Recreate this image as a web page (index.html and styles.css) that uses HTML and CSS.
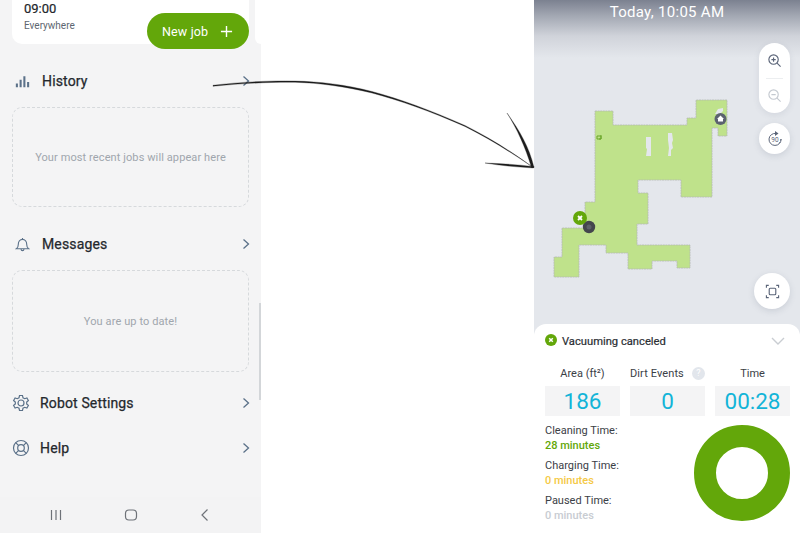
FILE: index.html
```html
<!DOCTYPE html>
<html lang="en">
<head>
<meta charset="utf-8">
<title>Robot vacuum</title>
<link rel="stylesheet" href="styles.css">
</head>
<body>
<div class="page">
  <section class="phone">
    <div class="job-card">
      <div class="job-time">09:00</div>
      <div class="job-where">Everywhere</div>
      <div class="new-job">
        <span>New job</span>
        <svg class="plus" viewBox="0 0 14 14"><path d="M7 1v12M1 7h12"/></svg>
      </div>
    </div>
    <div class="peek-card"></div>

    <div class="row row-history">
      <svg class="ico" viewBox="0 0 16 16"><path d="M2 14V10M6 14V6M10 14V2.500M14 14V8.500" class="bars"/></svg>
      <span class="row-title">History</span>
      <svg class="chev" viewBox="0 0 8 12"><path d="M1.500 1.500 6.500 6l-5 4.500"/></svg>
    </div>
    <div class="empty empty-history">Your most recent jobs will appear here</div>

    <div class="row row-messages">
      <svg class="ico" viewBox="0 0 16 16"><path d="M1.500 12.500c1.500-1 2-2.200 2-4.500 0-3 1.800-5.500 4.500-5.500s4.500 2.500 4.500 5.500c0 2.300.5 3.500 2 4.500zM6.500 13c0 2 3 2 3 0M8 1v1.500"/></svg>
      <span class="row-title">Messages</span>
      <svg class="chev" viewBox="0 0 8 12"><path d="M1.500 1.500 6.500 6l-5 4.500"/></svg>
    </div>
    <div class="empty empty-messages">You are up to date!</div>

    <div class="row row-settings">
      <svg class="ico ico-wide" viewBox="0 0 18 18"><path d="M7.500 1.500h3l.5 2.300 1.700.9 2.200-.8 1.500 2.600-1.700 1.500v2l1.700 1.500-1.500 2.600-2.200-.8-1.700.9-.5 2.300h-3l-.5-2.300-1.700-.9-2.200.8-1.500-2.600 1.700-1.500v-2L1.600 6.500l1.500-2.600 2.200.8 1.700-.9z"/><circle cx="9" cy="9" r="3"/></svg>
      <span class="row-title">Robot Settings</span>
      <svg class="chev" viewBox="0 0 8 12"><path d="M1.500 1.500 6.500 6l-5 4.500"/></svg>
    </div>
    <div class="row row-help">
      <svg class="ico ico-wide" viewBox="0 0 18 18"><circle cx="9" cy="9" r="7.500"/><circle cx="9" cy="9" r="3.300"/><path d="M3.700 3.700 6.700 6.700M14.300 3.700 11.300 6.700M3.700 14.300 6.700 11.300M14.300 14.300 11.300 11.300"/></svg>
      <span class="row-title">Help</span>
      <svg class="chev" viewBox="0 0 8 12"><path d="M1.500 1.500 6.500 6l-5 4.500"/></svg>
    </div>

    <div class="scrollbar"></div>

    <nav class="sys-nav">
      <svg class="sys-ico" viewBox="0 0 14 14"><path d="M2.500 2v10M7 2v10M11.500 2v10"/></svg>
      <svg class="sys-ico" viewBox="0 0 14 14"><rect x="1.500" y="2" width="11" height="10" rx="3.500"/></svg>
      <svg class="sys-ico" viewBox="0 0 14 14"><path d="M9.500 1.500 4 7l5.500 5.500"/></svg>
    </nav>
  </section>

  <div class="gap"></div>

  <section class="report">
    <div class="map">
      <div class="map-date">Today, 10:05 AM</div>
      <svg class="floor" viewBox="0 0 266 324">
        <path class="room" d="M61 111H79V125H153V118H162V100H193V136H184V128H178V197H147V180H104V193H114V224H103V245H156V268H143V261H118V269H94V253H72V245H45V277H20V257H28V228H51V202H61Z"/>
        <path class="hole" d="M112 137h5v19h-5l1-7-1-1zM134 133h4l1 7-1 3 1 5-2 2v6h-3l1-8-1-8z"/>
        <path class="hole" d="M181 114l3-5 5-1v3l-3 3z"/>
        <path class="mark" d="M63 136h4v3h-4zM65 139h2v-4"/>
        <circle class="home-dot" cx="186.500" cy="119" r="6"/>
        <path class="home-ico" d="M186.500 115.500 190 119h-1v2.500h-5V119h-1z"/>
        <circle class="robot" cx="55" cy="227" r="6.200"/>
        <circle class="robot-core" cx="55" cy="227" r="2.500"/>
        <circle class="pin" cx="46" cy="218" r="7"/>
        <path class="pin-x" d="M44 216l4 4M48 216l-4 4"/>
      </svg>
      <div class="zoom-pill">
        <svg class="ctl" viewBox="0 0 16 16"><circle cx="7" cy="7" r="5"/><path d="M10.700 10.700 14.500 14.500M7 4.700v4.600M4.700 7h4.600"/></svg>
        <div class="pill-line"></div>
        <svg class="ctl ctl-off" viewBox="0 0 16 16"><circle cx="7" cy="7" r="5"/><path d="M10.700 10.700 14.500 14.500M4.700 7h4.600"/></svg>
      </div>
      <div class="round-btn rotate">
        <svg class="ctl-rot" viewBox="0 0 18 18"><path d="M10 3.500A6 6 0 1 0 15 9" /><path class="rot-head" d="M9 1l3.500 2.500L9 6z"/><path class="rot-dash" d="M15 9a6 6 0 0 1-2 4.500"/><text x="9" y="11.500" class="rot-text">90</text></svg>
      </div>
      <div class="round-btn fit">
        <svg class="ctl" viewBox="0 0 16 16"><rect x="4.500" y="4.500" width="7" height="7" rx="1"/><path d="M1.500 4V1.500H4M12 1.500h2.500V4M14.500 12v2.500H12M4 14.500H1.500V12"/></svg>
      </div>
    </div>

    <div class="sheet">
      <div class="sheet-head">
        <svg class="status" viewBox="0 0 12 12"><circle cx="6" cy="6" r="6"/><path d="M4.200 4.200l3.600 3.600M7.800 4.200 4.200 7.800"/></svg>
        <span class="sheet-title">Vacuuming canceled</span>
        <svg class="collapse" viewBox="0 0 14 8"><path d="M1 1l6 6 6-6"/></svg>
      </div>
      <div class="stats">
        <div class="stat"><div class="stat-label">Area (ft²)</div><div class="stat-value">186</div></div>
        <div class="stat"><div class="stat-label stat-label-start">Dirt Events<span class="q">?</span></div><div class="stat-value">0</div></div>
        <div class="stat"><div class="stat-label">Time</div><div class="stat-value">00:28</div></div>
      </div>
      <div class="detail">
        <div class="times">
          <div class="time-item"><div>Cleaning Time:</div><div class="val val-green">28 minutes</div></div>
          <div class="time-item"><div>Charging Time:</div><div class="val val-yellow">0 minutes</div></div>
          <div class="time-item"><div>Paused Time:</div><div class="val val-grey">0 minutes</div></div>
        </div>
        <svg class="donut" viewBox="0 0 96 96"><circle cx="48" cy="48" r="37"/></svg>
      </div>
    </div>
  </section>

  <svg class="arrow" viewBox="0 0 800 533">
    <path class="arrow-fill" d="M213 85.300C240 82 270 80.500 295 81C320 81.700 345 84.500 372 91.500C400 99 430 110 465 125.500C490 138 512 152 532.500 167C512 153 490 139 465 126.500C430 111 400 100.500 372 93C345 86.500 320 83 295 82.300C270 82 240 83.500 213 86.300Z"/>
    <path class="arrow-fill" d="M507 113C516 127 525 146 531.500 167.500L534 167.500C529 146 519 130 507 113Z"/>
    <path class="arrow-fill" d="M485 163C500 163.500 516 164.500 534 166.500L533.500 168C516 167 500 165.500 485 163Z"/>
  </svg>
</div>
</body>
</html>
```
FILE: styles.css
```css
* { box-sizing: border-box; }
html, body { margin: 0; height: 100%; background: #fff; }
body { font-family: Roboto, "Liberation Sans", sans-serif; overflow: hidden; }

.page { position: relative; display: flex; width: 800px; height: 533px; }
.gap { width: 273px; flex: none; }

/* Left phone */
.phone {
  position: relative;
  width: 261px;
  height: 533px;
  flex: none;
  background: #f4f4f5;
  padding-left: 12px;
  padding-right: 12px;
}
.job-card {
  position: relative;
  width: 237px;
  height: 44px;
  background: #fff;
  border-radius: 0 0 10px 10px;
  padding: 1px 12px 0;
}
.peek-card {
  position: absolute;
  left: 255px;
  top: 0;
  width: 6px;
  height: 44px;
  background: #fff;
  border-radius: 0 0 0 8px;
}
.job-time { font-size: 13px; line-height: 16px; color: #23272c; -webkit-text-stroke: .2px #23272c; }
.job-where { font-size: 10px; line-height: 12px; margin-top: 3px; color: #5d6670; }
.new-job {
  position: absolute;
  left: 135px;
  top: 13px;
  width: 102px;
  height: 36px;
  border-radius: 18px;
  background: #63a70a;
  color: #fff;
  font-size: 12.500px;
  display: flex;
  align-items: center;
  padding-left: 15px;
  gap: 12px;
  letter-spacing: .15px;
}
.plus { width: 13px; height: 13px; fill: none; stroke: #fff; stroke-width: 1.500; }

.row { display: flex; align-items: center; height: 24px; gap: 10px; }
.row-history { margin-top: 25px; padding-left: 3px; gap: 12px; }
.row-messages { margin-top: 25px; padding-left: 3px; gap: 12px; }
.row-settings { margin-top: 19px; }
.row-help { margin-top: 21px; }
.row-title { font-size: 14px; color: #24282d; flex: 1; letter-spacing: .15px; -webkit-text-stroke: .25px #24282d; }
.ico { width: 15px; height: 15px; fill: none; stroke: #5b7189; stroke-width: 1.200; flex: none; }
.ico-wide { width: 18px; height: 18px; }
.bars { stroke-width: 2.200; }
.chev { width: 8px; height: 12px; fill: none; stroke: #5b7189; stroke-width: 1.300; flex: none; margin-right: -1px; }
.empty {
  display: flex;
  align-items: center;
  justify-content: center;
  border: 1px dashed #d6d9dc;
  border-radius: 10px;
  color: #a0a6ad;
  font-size: 11px;
  letter-spacing: .1px;
}
.empty-history { height: 100px; margin-top: 14px; }
.empty-messages { height: 102px; margin-top: 14px; }

.scrollbar {
  position: absolute;
  right: 0;
  top: 303px;
  width: 2px;
  height: 97px;
  background: #d3d6d9;
}
.sys-nav {
  position: absolute;
  left: 0;
  bottom: 0;
  width: 261px;
  height: 36px;
  background: #f3f3f4;
  display: flex;
  justify-content: space-between;
  align-items: center;
  padding: 0 49px;
}
.sys-ico { width: 14px; height: 14px; fill: none; stroke: #6e7278; stroke-width: 1.200; }

/* Right report */
.report {
  width: 266px;
  height: 533px;
  flex: none;
  display: flex;
  flex-direction: column;
  background: #e4e7ec;
}
.map {
  position: relative;
  height: 324px;
  flex: none;
  background: linear-gradient(#7b8190 0, #a3a8b3 16px, #d0d3da 36px, #e4e7ec 58px);
}
.map-date {
  text-align: center;
  color: #fff;
  font-size: 15px;
  line-height: 24px;
  letter-spacing: .3px;
}
.floor { position: absolute; left: 0; top: 0; width: 266px; height: 324px; }
.room { fill: #bfe28b; stroke: #b4bab4; stroke-width: .8; stroke-dasharray: 2 .6; }
.hole { fill: #e4e7ec; }
.mark { fill: none; stroke: #6aa52a; stroke-width: 1; }
.home-dot { fill: #5c6270; }
.home-ico { fill: #fff; }
.robot { fill: #44464d; }
.robot-core { fill: #5d6068; }
.pin { fill: #63a70a; }
.pin-x { fill: none; stroke: #fff; stroke-width: 1.800; }

.zoom-pill {
  position: absolute;
  left: 225px;
  top: 43px;
  width: 31px;
  height: 70px;
  border-radius: 16px;
  background: #fff;
  box-shadow: 0 2px 6px rgba(90, 100, 120, .12);
  display: flex;
  flex-direction: column;
  align-items: center;
  justify-content: space-between;
  padding: 10px 0;
}
.pill-line { width: 17px; height: 1px; background: #eceef0; }
.ctl { width: 15px; height: 15px; fill: none; stroke: #5a6478; stroke-width: 1.200; }
.ctl-off { stroke: #c4c9d0; }
.round-btn {
  position: absolute;
  border-radius: 50%;
  background: #fff;
  box-shadow: 0 2px 6px rgba(90, 100, 120, .18);
  display: flex;
  align-items: center;
  justify-content: center;
}
.rotate { left: 225px; top: 123px; width: 31px; height: 31px; }
.fit { left: 220px; top: 273px; width: 36px; height: 36px; }
.ctl-rot { width: 18px; height: 18px; fill: none; stroke: #5a6478; stroke-width: 1; }
.rot-head { fill: #5a6478; stroke: none; }
.rot-dash { stroke-dasharray: 1.500 1.500; }
.rot-text { font-size: 6.500px; text-anchor: middle; fill: #5a6478; stroke: none; font-family: Roboto, sans-serif; }

.sheet {
  flex: 1;
  background: #fff;
  border-radius: 12px 12px 0 0;
  padding: 0 10px 0 11px;
}
.sheet-head { display: flex; align-items: center; height: 34px; }
.status { width: 12px; height: 12px; margin-top: -2px; margin-right: 5px; flex: none; }
.status circle { fill: #63a70a; }
.status path { fill: none; stroke: #fff; stroke-width: 1.500; }
.sheet-title { font-size: 11.200px; color: #2b2f34; flex: 1; -webkit-text-stroke: .2px #2b2f34; }
.collapse { width: 14px; height: 8px; fill: none; stroke: #c9cdd2; stroke-width: 1.400; margin-right: 5px; }

.stats { display: flex; gap: 10px; margin-top: 7px; }
.stat { width: 75px; }
.stat-label {
  display: flex;
  align-items: center;
  justify-content: center;
  height: 21px;
  padding-bottom: 5px;
  font-size: 11px;
  color: #3b4046;
  position: relative;
}
.stat-label-start { justify-content: flex-start; letter-spacing: .1px; }
.q {
  position: absolute;
  right: 0;
  top: 2px;
  width: 13px;
  height: 13px;
  border-radius: 50%;
  background: #e2e6ec;
  color: #fff;
  font-size: 9px;
  text-align: center;
  line-height: 13px;
}
.stat-value {
  height: 30px;
  background: #f4f4f5;
  color: #13b4d8;
  font-size: 22.500px;
  line-height: 30px;
  text-align: center;
}
.detail { display: flex; justify-content: space-between; }
.times { padding-top: 7px; font-size: 11px; line-height: 15px; color: #3b4046; }
.time-item { margin-bottom: 5px; }
.val { font-weight: 500; }
.val-green { color: #63a70a; }
.val-yellow { color: #f5c945; }
.val-grey { color: #c8ccd2; }
.donut { width: 96px; height: 96px; margin-top: 9px; fill: none; stroke: #63a70a; stroke-width: 22; }

/* Hand-drawn annotation */
.arrow { position: absolute; left: 0; top: 0; width: 800px; height: 533px; pointer-events: none; }
.arrow-fill { fill: #1c1c1c; stroke: #1c1c1c; stroke-width: .3; }
```
